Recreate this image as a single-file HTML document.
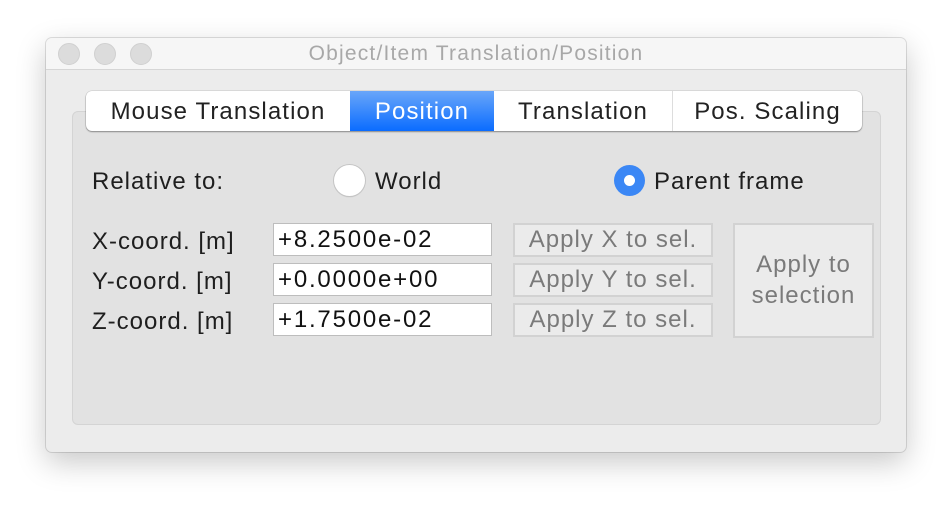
<!DOCTYPE html>
<html><head><style>
body{margin:0;width:952px;height:506px;background:#fff;position:relative;overflow:hidden;font-family:"Liberation Sans",sans-serif;}
.abs{position:absolute;}
.win{left:46px;top:38px;width:860px;height:414px;background:#ececec;border-radius:6px;box-shadow:0 10px 30px rgba(0,0,0,.22),0 0 0 1px rgba(0,0,0,.12);}
.title{left:46px;top:38px;width:860px;height:31px;background:#f6f6f6;border-bottom:1px solid #d6d6d6;border-radius:6px 6px 0 0;}
.dot{width:22px;height:22px;border-radius:50%;background:#dcdcdc;border:1px solid #d0d0d0;box-sizing:border-box;top:43px;}
.panel{left:72px;top:111px;width:809px;height:314px;background:#e2e2e2;border:1px solid #d4d4d4;border-radius:6px;box-sizing:border-box;}
.tabs{left:86px;top:91px;width:776px;height:40px;background:#fff;border-radius:6px;box-shadow:0 1px 1.5px rgba(0,0,0,.35),0 0 0 .5px rgba(0,0,0,.15);overflow:hidden;}
.tab{position:absolute;top:0;height:40px;line-height:41px;text-align:center;font-size:24px;letter-spacing:1.1px;color:#222;}
.lbl{font-size:24px;letter-spacing:1px;color:#1e1e1e;}
.inp{left:273px;width:219px;height:33px;background:#fff;border:1px solid #bdbdbd;box-sizing:border-box;font-size:24px;letter-spacing:1.8px;line-height:31px;padding-left:4px;color:#111;}
.btn{left:513px;width:200px;height:34px;border:2px solid #d2d2d2;box-sizing:border-box;background:#ebebeb;color:#7a7a7a;font-size:24px;letter-spacing:1px;text-align:center;line-height:30px;white-space:nowrap;}
</style></head><body>
<div class="abs win"></div>
<div class="abs title"></div>
<div class="abs dot" style="left:58px"></div>
<div class="abs dot" style="left:94px"></div>
<div class="abs dot" style="left:130px"></div>
<div class="abs" style="left:46px;width:860px;top:42px;text-align:center;font-size:21px;letter-spacing:1.2px;color:#a8a8a8;">Object/Item Translation/Position</div>
<div class="abs panel"></div>
<div class="abs tabs">
<div class="tab" style="left:0;width:264px;">Mouse Translation</div>
<div class="tab" style="left:264px;width:144px;background:linear-gradient(#69a6f9,#0a6cff);color:#fff;">Position</div>
<div class="tab" style="left:408px;width:178px;border-right:1px solid #ddd;">Translation</div>
<div class="tab" style="left:587px;width:189px;">Pos. Scaling</div>
</div>
<div class="abs lbl" style="left:92px;top:168px">Relative to:</div>
<div class="abs" style="left:334px;top:165px;width:31px;height:31px;border-radius:50%;background:#fff;box-shadow:0 0 0 1px #c4c4c4,0 1px 1px rgba(0,0,0,.2);"></div>
<div class="abs lbl" style="left:375px;top:168px">World</div>
<div class="abs" style="left:614px;top:165px;width:31px;height:31px;border-radius:50%;background:#3b87f5;"></div>
<div class="abs" style="left:624px;top:175px;width:11px;height:11px;border-radius:50%;background:#fff;"></div>
<div class="abs lbl" style="left:654px;top:168px">Parent frame</div>
<div class="abs lbl" style="left:92px;top:228px">X-coord. [m]</div>
<div class="abs lbl" style="left:92px;top:268px">Y-coord. [m]</div>
<div class="abs lbl" style="left:92px;top:308px">Z-coord. [m]</div>
<div class="abs inp" style="top:223px">+8.2500e-02</div>
<div class="abs inp" style="top:263px">+0.0000e+00</div>
<div class="abs inp" style="top:303px">+1.7500e-02</div>
<div class="abs btn" style="top:223px">Apply X to sel.</div>
<div class="abs btn" style="top:263px">Apply Y to sel.</div>
<div class="abs btn" style="top:303px">Apply Z to sel.</div>
<div class="abs btn" style="left:733px;top:223px;width:141px;height:115px;line-height:31px;padding-top:24px;">Apply to<br>selection</div>
</body></html>
